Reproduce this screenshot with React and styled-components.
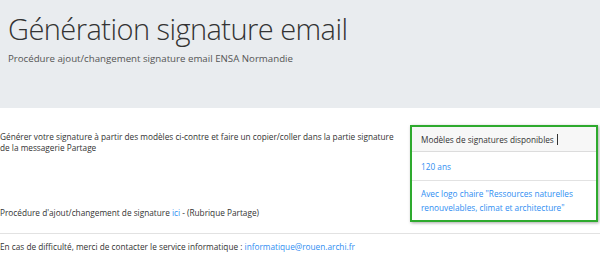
import styled, { createGlobalStyle } from 'styled-components';

const Global = createGlobalStyle`
    html, body {
        margin: 0;
        padding: 0;
        background: #fff;
    }
    body {
        font-family: "Open Sans", "Noto Sans", sans-serif;
        color: #212529;
    }
`;

const Page = styled.div`
    width: 600px;
    height: 271px;
    overflow: hidden;
`;

const Jumbotron = styled.header`
    background: #e9ecef;
    height: 108px;
    padding: 11px 8px 0;
    box-sizing: border-box;
`;

const Title = styled.h1`
    margin: 0;
    font-weight: 300;
    font-size: 29px;
    line-height: 36px;
    letter-spacing: -0.55px;
    color: #333;
`;

const Lead = styled.p`
    margin: 5px 0 0;
    font-size: 9.7px;
    color: #555;
`;

const Main = styled.section`
    display: flex;
    justify-content: space-between;
    padding: 17px 2px 0 0;
`;

const Left = styled.div`
    display: flex;
    flex-direction: column;
    justify-content: space-between;
    padding: 6px 0 4px;
    width: 400px;
`;

const Text = styled.p`
    margin: 0;
    font-size: 8.25px;
    line-height: 11px;
    color: #333;
`;

const Link = styled.a`
    color: #2f8ef2;
    text-decoration: none;
`;

const Card = styled.div`
    width: 184px;
    border: 2px solid #2eaa2e;
    box-shadow: 1px 1px 3px rgba(0, 0, 0, 0.35);
    background: #fff;
`;

const CardHeader = styled.div`
    background: #f7f7f7;
    border-bottom: 1px solid #dcdcdc;
    padding: 7px 9px 6px;
    font-size: 8.25px;
    line-height: 11px;
    color: #333;
`;

const Caret = styled.span`
    display: inline-block;
    width: 0;
    height: 11px;
    border-right: 1px solid #333;
    margin-left: 3px;
    vertical-align: -2px;
`;

const CardItem = styled.div`
    padding: ${({ $tall }) => ($tall ? '6px 9px 5px' : '8px 9px 6px')};
    font-size: 8.25px;
    line-height: 14px;
    border-top: ${({ $first }) => ($first ? 'none' : '1px solid #e2e2e2')};
`;

const Rule = styled.hr`
    margin: 11px 0 0;
    border: 0;
    border-top: 1px solid #e2e2e2;
`;

const Footer = styled.div`
    padding-top: 7px;
`;

export default function App() {
    return (
        <Page>
            <Global />
            <Jumbotron>
                <Title>Génération signature email</Title>
                <Lead>Procédure ajout/changement signature email ENSA Normandie</Lead>
            </Jumbotron>
            <Main>
                <Left>
                    <Text>
                        Générer votre signature à partir des modèles ci-contre et faire un copier/coller dans la partie signature
                        de la messagerie Partage
                    </Text>
                    <Text>
                        Procédure d'ajout/changement de signature <Link href="#">ici</Link> - (Rubrique Partage)
                    </Text>
                </Left>
                <Card>
                    <CardHeader>
                        Modèles de signatures disponibles<Caret />
                    </CardHeader>
                    <CardItem $first>
                        <Link href="#">120 ans</Link>
                    </CardItem>
                    <CardItem $tall>
                        <Link href="#">
                            Avec logo chaire "Ressources naturelles renouvelables, climat et architecture"
                        </Link>
                    </CardItem>
                </Card>
            </Main>
            <Rule />
            <Footer>
                <Text>
                    En cas de difficulté, merci de contacter le service informatique :{' '}
                    <Link href="#">informatique@rouen.archi.fr</Link>
                </Text>
            </Footer>
        </Page>
    );
}
